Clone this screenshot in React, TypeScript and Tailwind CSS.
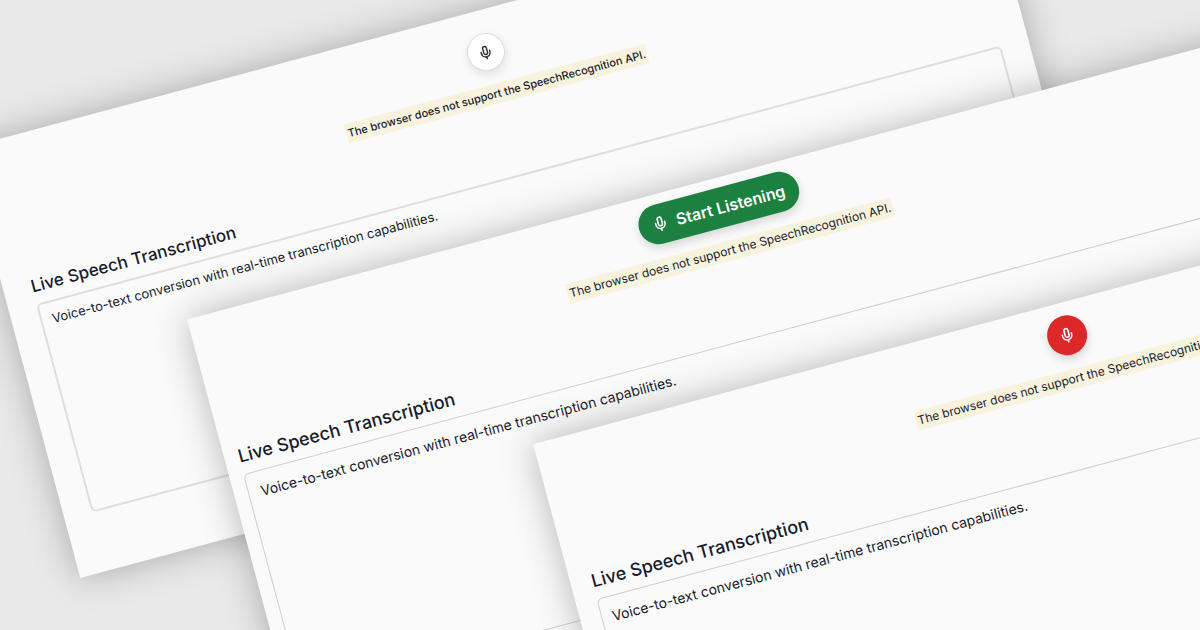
import React from "react";
import clsx from "clsx";
import { Mic } from "lucide-react";

type PanelProps = {
  id: string;
  className: string;
  titleClass: string;
  noteClass: string;
  textClass: string;
  children: React.ReactNode;
};

const Panel = ({
  id,
  className,
  titleClass,
  noteClass,
  textClass,
  children,
}: PanelProps) => {
  return (
    <section
      className={clsx(
        "absolute flex flex-col bg-[#fafafa] text-[#181c2c] shadow-[0_0_36px_rgba(0,0,0,0.28)]",
        className
      )}
    >
      {/* Mic button and browser notice */}
      <div className="flex flex-col items-center gap-[14px]">
        {children}
        <p
          className={clsx(
            "h-5 whitespace-nowrap bg-[#f8f3de] px-[2px] leading-5",
            noteClass
          )}
        >
          The browser does not support the SpeechRecognition API.
        </p>
      </div>

      {/* Transcript */}
      <div className={clsx("flex flex-col gap-1", titleClass)}>
        <label htmlFor={id} className="font-medium leading-7">
          Live Speech Transcription
        </label>
        <textarea
          id={id}
          className={clsx(
            "block w-full resize-none overflow-hidden rounded-md bg-transparent leading-6 outline-none",
            textClass
          )}
          defaultValue="Voice-to-text conversion with real-time transcription capabilities."
        />
      </div>
    </section>
  );
};

const App = () => {
  return (
    <main className="relative min-h-screen overflow-hidden bg-[#e9e9e9] font-['Inter',sans-serif]">
      <div className="absolute left-0 top-0 origin-top-left -rotate-15">
        <Panel
          id="transcript-outline"
          className="left-[-72px] top-[134px] h-[445px] w-[1055px] px-7 pt-[23px]"
          titleClass="mt-[42px] text-[17px]"
          noteClass="text-[11px] font-medium"
          textClass="h-[216px] border-2 border-[#dedede] px-[10px] py-1 text-[13px]"
        >
          <button
            type="button"
            aria-label="Start listening"
            className="flex size-[38px] items-center justify-center rounded-full border border-[#dcdcdc] bg-white text-[#333] shadow-[0_4px_10px_rgba(0,0,0,0.1)]"
          >
            <Mic size={15} strokeWidth={2.4} />
          </button>
        </Panel>

        <Panel
          id="transcript-label"
          className="left-[98px] top-[357px] h-[458px] w-[1085px] px-[14px] pt-[10px]"
          titleClass="mt-12 text-[18px]"
          noteClass="text-[12px]"
          textClass="h-[229px] border border-[#cfcfcf] px-3 py-2 text-[14px]"
        >
          <button
            type="button"
            className="flex h-10 items-center gap-2 rounded-full bg-[#1b8040] px-[14px] text-[16px] font-semibold text-white shadow-[0_4px_10px_rgba(0,0,0,0.15)]"
          >
            <Mic size={16} strokeWidth={2.4} />
            Start Listening
          </button>
        </Panel>

        <Panel
          id="transcript-recording"
          className="left-[400px] top-[567px] h-[458px] w-[1088px] px-[21px] pt-[13px]"
          titleClass="mt-[47px] text-[18px]"
          noteClass="text-[12px]"
          textClass="h-[229px] border border-[#cfcfcf] px-[10px] py-2 text-[14px]"
        >
          <button
            type="button"
            aria-label="Stop listening"
            className="flex size-10 items-center justify-center rounded-full bg-[#dc2828] text-white shadow-[0_4px_10px_rgba(0,0,0,0.15)]"
          >
            <Mic size={16} strokeWidth={2.4} />
          </button>
        </Panel>
      </div>
    </main>
  );
};

export default App;
